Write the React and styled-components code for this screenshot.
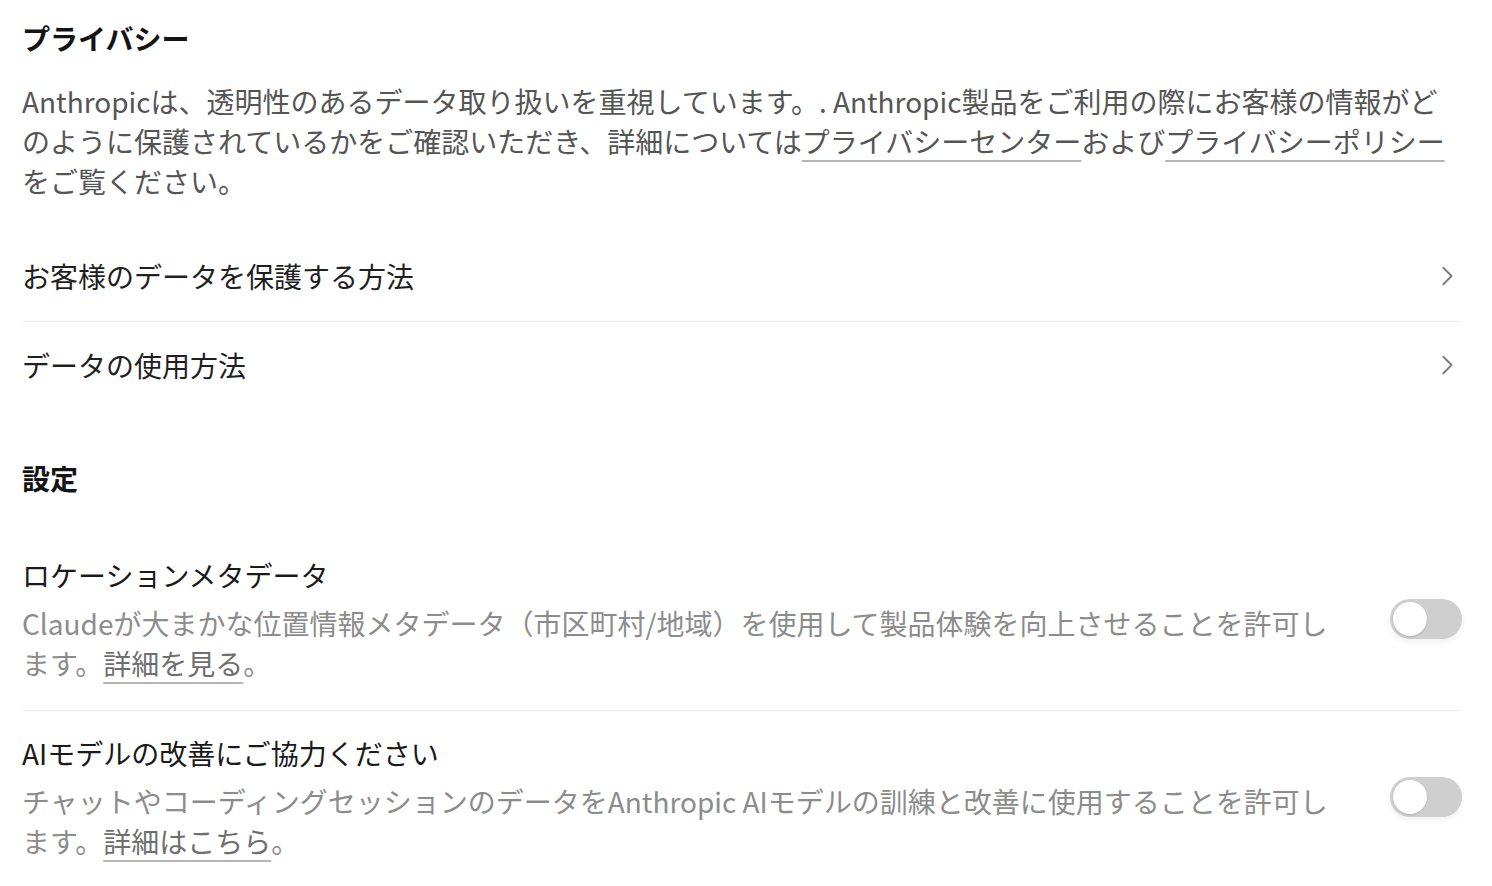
import React, { useState } from 'react';
import styled, { createGlobalStyle } from 'styled-components';

const GlobalStyle = createGlobalStyle`
  html, body {
    margin: 0;
    padding: 0;
    background: #ffffff;
  }
  body {
    font-family: "Noto Sans CJK JP", "Noto Sans", sans-serif;
    -webkit-font-smoothing: antialiased;
  }
`;

const Page = styled.div`
  padding: 18px 30px 0 22px;
  color: #1a1a1a;
`;

const SectionTitle = styled.h2`
  margin: ${(props) => props.$top || '0'} 0 0;
  font-size: 28px;
  line-height: 40px;
  font-weight: 700;
  color: #141414;
`;

const Intro = styled.p`
  margin: 23px 0 0;
  font-size: 28px;
  line-height: 40px;
  color: #555555;
`;

const TextLink = styled.a`
  color: inherit;
  text-decoration: underline;
  text-decoration-color: #b5b5b5;
  text-decoration-thickness: 2px;
  text-underline-offset: 7px;
  cursor: pointer;
`;

const NavList = styled.div`
  margin-top: 29px;
`;

const NavRow = styled.div`
  display: flex;
  align-items: center;
  justify-content: space-between;
  height: 91px;
  font-size: 28px;
  color: #1f1f1f;
  cursor: pointer;

  & + & {
    height: 86px;
    border-top: 1px solid #ececec;
  }
`;

const Chevron = styled.svg`
  width: 22px;
  height: 22px;
  margin-right: 4px;
  color: #7a7a7a;
`;

const SettingList = styled.div`
  margin-top: 32px;
`;

const SettingRow = styled.div`
  display: flex;
  align-items: center;
  gap: 48px;
  padding: 25px 0 27px;

  & + & {
    padding-top: 22px;
    border-top: 1px solid #ececec;
  }
`;

const SettingText = styled.div`
  flex: 1;
  min-width: 0;
`;

const SettingName = styled.div`
  font-size: 28px;
  line-height: 40px;
  color: #1a1a1a;
`;

const SettingDesc = styled.div`
  margin-top: 8px;
  font-size: 28px;
  line-height: 40px;
  color: #8c8c8c;

  a {
    color: #6f6f6f;
  }
`;

const Switch = styled.button`
  flex: none;
  position: relative;
  width: 72px;
  height: 40px;
  padding: 0;
  border: none;
  border-radius: 20px;
  background: ${(props) => (props.$on ? '#2c84db' : '#cfcfcf')};
  box-shadow: 0 3px 6px rgba(0, 0, 0, 0.06);
  cursor: pointer;

  &::after {
    content: '';
    position: absolute;
    top: 3px;
    left: ${(props) => (props.$on ? '35px' : '3px')};
    width: 34px;
    height: 34px;
    border-radius: 50%;
    background: #ffffff;
    box-shadow: 0 1px 2px rgba(0, 0, 0, 0.15);
  }
`;

function ChevronRight() {
  return (
    <Chevron viewBox="0 0 24 24" fill="none" stroke="currentColor" strokeWidth="2" strokeLinecap="round" strokeLinejoin="round">
      <path d="M8 3l9 9-9 9" />
    </Chevron>
  );
}

function Setting({ name, children }) {
  const [on, setOn] = useState(false);
  return (
    <SettingRow>
      <SettingText>
        <SettingName>{name}</SettingName>
        <SettingDesc>{children}</SettingDesc>
      </SettingText>
      <Switch $on={on} onClick={() => setOn(!on)} aria-label={name} />
    </SettingRow>
  );
}

export default function App() {
  return (
    <>
      <GlobalStyle />
      <Page>
        <SectionTitle>プライバシー</SectionTitle>
        <Intro>
          Anthropicは、透明性のあるデータ取り扱いを重視しています。. Anthropic製品をご利用の際にお客様の情報がどのように保護されているかをご確認いただき、詳細については
          <TextLink>プライバシーセンター</TextLink>および<TextLink>プライバシーポリシー</TextLink>
          をご覧ください。
        </Intro>

        <NavList>
          <NavRow>
            お客様のデータを保護する方法
            <ChevronRight />
          </NavRow>
          <NavRow>
            データの使用方法
            <ChevronRight />
          </NavRow>
        </NavList>

        <SectionTitle $top="50px">設定</SectionTitle>

        <SettingList>
          <Setting name="ロケーションメタデータ">
            Claudeが大まかな位置情報メタデータ（市区町村/地域）を使用して製品体験を向上させることを許可します。
            <TextLink>詳細を見る</TextLink>。
          </Setting>
          <Setting name="AIモデルの改善にご協力ください">
            チャットやコーディングセッションのデータをAnthropic AIモデルの訓練と改善に使用することを許可します。
            <TextLink>詳細はこちら</TextLink>。
          </Setting>
        </SettingList>
      </Page>
    </>
  );
}
